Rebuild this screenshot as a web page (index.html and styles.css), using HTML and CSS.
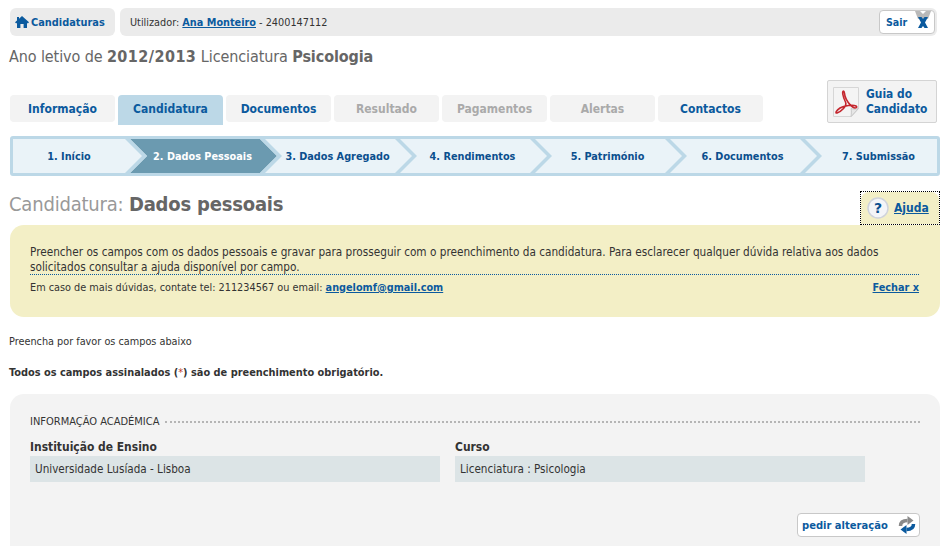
FILE: index.html
```html
<!DOCTYPE html>
<html lang="pt">
<head>
<meta charset="utf-8">
<title>Candidatura: Dados pessoais</title>
<link rel="stylesheet" href="styles.css">
</head>
<body>
<div class="page">
  <header class="topbar">
    <a class="home" href="#">
      <svg class="home-ico" viewBox="0 0 14 12" width="14" height="12"><path fill="#0b5a9e" d="M7 0 14 6.300 12.800 7.400 12 6.800V12H8.600V8H5.400v4H2V6.800l-.8.6L0 6.300 2 4.500V1h2v1.700z"/></svg>
      Candidaturas
    </a>
    <div class="userbar">
      <span class="user">Utilizador: <a href="#">Ana Monteiro</a> - 2400147112</span>
      <a class="sair" href="#">Sair
        <svg viewBox="0 0 16 22" width="16" height="22"><path fill="#b9b9b9" d="M0 0h5l3 3 3-3h5l-3 8H3z"/><path fill="#0b5a9e" d="M3 6h3.500L8 8l1.500-2H13l-3 5.500L13 17H9.500L8 15l-1.500 2H3l3-5.500z"/></svg>
      </a>
    </div>
  </header>

  <h1 class="year">Ano letivo de <b class="yr">2012/2013</b> Licenciatura <b>Psicologia</b></h1>

  <nav class="tabs">
    <a class="tab" href="#">Informação</a>
    <a class="tab active" href="#">Candidatura</a>
    <a class="tab" href="#">Documentos</a>
    <a class="tab off" href="#">Resultado</a>
    <a class="tab off" href="#">Pagamentos</a>
    <a class="tab off" href="#">Alertas</a>
    <a class="tab" href="#">Contactos</a>
    <a class="guia" href="#">
      <svg viewBox="0 0 26 30" width="26" height="30"><path fill="#f4f4f4" stroke="#d6d6d6" d="M.5.5h25v21l-7 8H.5z"/><path fill="#e6e6e6" stroke="#c8c8c8" d="M25.500 21.500c-3 1-6 .5-7.500 0 .5 2 .5 5 0 8z"/><path fill="none" stroke="#c4262e" stroke-width="1.600" d="M10.500 4c-1.500 0-1 5 2 11 2 4-4.500 9.500-8.500 11-2 .5-1-2.500 3-5 4-2.500 13-3.500 16-2 2 1.200-.5 2.800-3 1.300-3-1.800-7-7.300-8-11.300-.7-3-.5-5-1.500-5z"/></svg>
      <span>Guia do<br>Candidato</span>
    </a>
  </nav>

  <ol class="steps">
    <li class="step">1. Início</li>
    <li class="step current">2. Dados Pessoais</li>
    <li class="step">3. Dados Agregado</li>
    <li class="step">4. Rendimentos</li>
    <li class="step">5. Património</li>
    <li class="step">6. Documentos</li>
    <li class="step last">7. Submissão</li>
  </ol>

  <div class="head">
    <h2 class="title">Candidatura: <b>Dados pessoais</b></h2>
    <a class="ajuda" href="#">
      <span class="ajuda-in">
        <svg viewBox="0 0 22 22" width="22" height="22"><circle cx="11" cy="11" r="10" fill="#f4f5f8" stroke="#cfd3dc" stroke-width="1.500"/><text x="11" y="16" text-anchor="middle" class="q">?</text></svg>
        <u>Ajuda</u>
      </span>
    </a>
  </div>

  <section class="notice">
    <p class="notice-text">Preencher os campos com os dados pessoais e gravar para prosseguir com o preenchimento da candidatura. Para esclarecer qualquer dúvida relativa aos dados solicitados consultar a ajuda disponível por campo.</p>
    <div class="notice-foot">
      <span>Em caso de mais dúvidas, contate tel: 211234567 ou email: <a href="#">angelomf@gmail.com</a></span>
      <a href="#">Fechar x</a>
    </div>
  </section>

  <p class="hint">Preencha por favor os campos abaixo</p>
  <p class="req">Todos os campos assinalados (<span>*</span>) são de preenchimento obrigatório.</p>

  <section class="panel">
    <div class="legend"><span>INFORMAÇÃO ACADÉMICA</span><i></i></div>
    <div class="fields">
      <div class="field"><label>Instituição de Ensino</label><div class="value">Universidade Lusíada - Lisboa</div></div>
      <div class="field"><label>Curso</label><div class="value">Licenciatura : Psicologia</div></div>
    </div>
    <div class="actions">
      <a class="pedir" href="#">pedir alteração
        <svg viewBox="0 0 18 18" width="18" height="18"><path fill="none" stroke="#8a8a8a" stroke-width="3.500" d="M2.500 10C2.500 6 5 4.500 9.500 4.500"/><path fill="#8a8a8a" d="M9.500 0 15.500 4.500 9.500 9z"/><path fill="none" stroke="#0b5a9e" stroke-width="3.500" d="M15.500 8C15.500 12 13 13.500 8.500 13.500"/><path fill="#0b5a9e" d="M8.500 9 2.500 13.500 8.500 18z"/></svg>
      </a>
    </div>
  </section>
</div>
</body>
</html>
```

FILE: styles.css
```css
* { box-sizing: border-box; }
html, body { margin: 0; padding: 0; background: #fff; }
body { font-family: "DejaVu Sans Condensed", "DejaVu Sans", sans-serif; font-size: 11px; color: #333; overflow: hidden; height: 546px; }
a { color: #0b5a9e; }
.page { padding: 8px 2px 0 10px; width: 942px; }

.topbar { display: flex; gap: 5px; height: 28px; width: 927px; }
.home { display: flex; align-items: center; gap: 2px; width: 105px; padding-left: 5px; background: #ebebeb; border-radius: 6px; font-weight: bold; font-size: 10.900px; color: #0b5a9e; text-decoration: none; }
.userbar { flex: 1; display: flex; align-items: center; justify-content: space-between; background: #ebebeb; border-radius: 6px; padding: 0 2px 0 10px; }
.user { font-size: 10.800px; }
.user a { font-weight: bold; }
.sair { display: flex; align-items: flex-start; justify-content: space-between; width: 56px; height: 24px; padding: 0 3px 0 6px; background: #fff; border: 1px solid #c8c8c8; border-radius: 4px; color: #0b5a9e; font-weight: bold; font-size: 10.600px; line-height: 22px; text-decoration: none; overflow: hidden; }

.year { margin: 11px 0 0 -1px; font-size: 16px; line-height: 20px; font-weight: normal; color: #666; letter-spacing: -.1px; }
.yr { letter-spacing: .45px; }

.tabs { position: relative; display: flex; gap: 3px; margin-top: 28px; height: 30px; align-items: flex-start; }
.tab { display: flex; align-items: center; justify-content: center; width: 105px; height: 27px; background: #f3f3f3; border-radius: 4px; font-weight: bold; font-size: 12px; color: #0b5a9e; text-decoration: none; }
.tab.active { height: 30px; padding-bottom: 3px; background: #bcd8e7; border-radius: 4px 4px 0 0; }
.tab.off { color: #aaa; }
.guia { position: absolute; left: 817px; top: -15px; width: 110px; height: 43px; display: flex; align-items: center; gap: 7px; padding-left: 5px; background: #f3f3f3; border: 1px solid #d4d4d4; border-radius: 2px; font-weight: bold; font-size: 11.900px; line-height: 15px; color: #0b5a9e; text-decoration: none; }

.steps { display: grid; grid-template-columns: 112px repeat(5, 135px) 1fr; list-style: none; margin: 11px 0 0; padding: 0; width: 930px; height: 40px; background: #eaf3f8; border: 3px solid #bcd8e7; border-radius: 3px; overflow: hidden; }
.step { position: relative; display: flex; align-items: center; justify-content: center; padding-left: 20px; font-weight: bold; font-size: 10.800px; color: #0b4f8e; }
.step:first-child { padding-left: 0; }
.step::after { content: ""; position: absolute; left: 100%; top: 0; z-index: 2; width: 22px; height: 100%; background: #bcd8e7; clip-path: polygon(0 0, 5px 0, 22px 50%, 5px 100%, 0 100%, 17px 50%); }
.step.last::after { display: none; }
.step.current { z-index: 1; color: #fff; }
.step.current::before { content: ""; position: absolute; left: 5px; top: 0; z-index: -1; width: 147px; height: 100%; background: #6b9ab0; clip-path: polygon(0 0, 130px 0, 147px 50%, 130px 100%, 0 100%, 17px 50%); }

.head { display: flex; justify-content: space-between; margin-top: 15px; height: 34px; width: 930px; }
.title { margin: 0 0 0 -1px; font-size: 20px; line-height: 26px; font-weight: normal; color: #999; letter-spacing: -.2px; }
.title b { color: #666; }
.ajuda { display: block; width: 80px; height: 34px; padding: 0; border: 1px dotted #000; font-weight: bold; font-size: 12px; color: #0b5a9e; text-decoration: none; }
.ajuda-in { display: flex; align-items: center; gap: 5px; height: 100%; padding-left: 6px; background: #f3efc6; border-radius: 8px 8px 0 0; }
.q { font: bold 14px "DejaVu Sans", sans-serif; fill: #0b4f8e; }

.notice { width: 930px; height: 92px; background: #f3efc6; border-radius: 14px 0 14px 14px; padding: 20px 20px 0; }
.notice-text { margin: 0; height: 30px; font-size: 11.700px; line-height: 15px; border-bottom: 1px dotted #0b5a9e; width: 889px; }
.notice-foot { display: flex; justify-content: space-between; margin-top: 6px; width: 889px; font-size: 10.800px; line-height: 14px; }
.notice-foot a { font-weight: bold; }

.hint { margin: 18px 0 0 -1px; font-size: 10.800px; line-height: 14px; }
.req { margin: 17px 0 0 -1px; font-size: 10.900px; line-height: 14px; font-weight: bold; }
.req span { color: #c0392b; font-weight: normal; }

.panel { margin-top: 14px; width: 930px; height: 160px; background: #f3f3f3; border-radius: 14px 14px 0 0; padding: 21px 20px 0; }
.legend { display: flex; align-items: center; gap: 6px; font-size: 11px; line-height: 14px; }
.legend i { flex: 1; border-top: 2px dotted #b5b5b5; }
.fields { display: flex; gap: 15px; margin-top: 11px; }
.field { width: 410px; }
.field label { display: block; font-weight: bold; font-size: 11.950px; line-height: 14px; margin-bottom: 2px; color: #333; }
.value { height: 26px; line-height: 26px; padding-left: 5px; background: #dce4e6; font-size: 11.600px; }
.actions { display: flex; justify-content: flex-end; margin-top: 31px; }
.pedir { display: flex; align-items: center; justify-content: space-between; width: 123px; height: 24px; padding: 0 3px 0 4px; background: #fff; border: 1px solid #c8c8c8; border-radius: 4px; font-weight: bold; font-size: 11.100px; text-decoration: none; }
```
